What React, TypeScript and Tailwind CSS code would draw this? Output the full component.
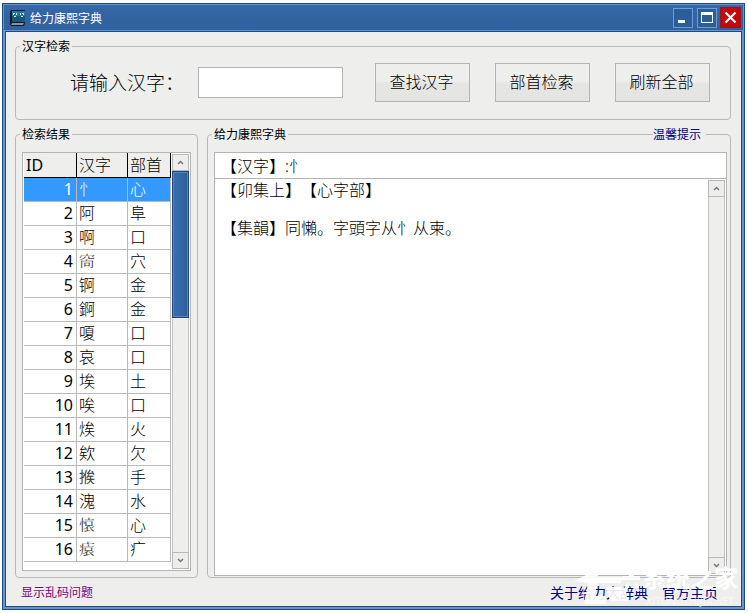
import type { ReactNode } from "react";
import clsx from "clsx";

const entries = [
  { id: 1, char: "忄", radical: "心" },
  { id: 2, char: "阿", radical: "阜" },
  { id: 3, char: "啊", radical: "口" },
  { id: 4, char: "𥥩", radical: "穴", rare: true },
  { id: 5, char: "锕", radical: "金" },
  { id: 6, char: "錒", radical: "金" },
  { id: 7, char: "嗄", radical: "口" },
  { id: 8, char: "哀", radical: "口" },
  { id: 9, char: "埃", radical: "土" },
  { id: 10, char: "唉", radical: "口" },
  { id: 11, char: "㶼", radical: "火" },
  { id: 12, char: "欸", radical: "欠" },
  { id: 13, char: "𢰇", radical: "手", rare: true },
  { id: 14, char: "溾", radical: "水" },
  { id: 15, char: "𢜺", radical: "心", rare: true },
  { id: 16, char: "𤸖", radical: "疒", rare: true },
];

const definition = "【卯集上】【心字部】\n\n【集韻】同懶。字頭字从忄从柬。";

const Group = ({
  title,
  className,
  children,
}: {
  title: string;
  className?: string;
  children: ReactNode;
}) => (
  <fieldset className={clsx("min-w-0 rounded border border-[#b9b9b9]", className)}>
    <legend className="ml-1 px-[2px] pt-[2px] text-xs leading-4">{title}</legend>
    {children}
  </fieldset>
);

const ToolButton = ({ children }: { children: ReactNode }) => (
  <button
    type="button"
    className="h-[39px] w-[95px] shrink-0 border border-[#b4b4b4] bg-linear-to-b from-[#eeeeed] from-45% to-[#e5e5e4] to-55% pr-[2px] pb-[2px] text-base font-light"
  >
    {children}
  </button>
);

const ScrollButton = ({ up }: { up?: boolean }) => (
  <button
    type="button"
    aria-label={up ? "向上滚动" : "向下滚动"}
    className="flex h-[17px] shrink-0 items-center justify-center border border-[#b9b9b9] bg-[#ededec]"
  >
    <svg width="7" height="5" viewBox="0 0 7 5" fill="none" stroke="#777" strokeWidth="1.5">
      <path d={up ? "M1 4 L3.5 1.5 L6 4" : "M1 1 L3.5 3.5 L6 1"} />
    </svg>
  </button>
);

const ScrollBar = ({ thumb }: { thumb?: boolean }) => (
  <div className="flex w-[17px] shrink-0 flex-col bg-[#eeeeec]">
    <ScrollButton up />
    <div className="grow border-x border-[#c2c2c2]">
      {thumb && (
        <div className="-mx-px h-[147px] border border-[#1d4680] bg-linear-to-r from-[#3a6dac] to-[#2d5f9e] inset-ring inset-ring-[#5585bd]" />
      )}
    </div>
    <ScrollButton />
  </div>
);

const TitleBar = () => (
  <header className="mb-px flex h-[25px] items-center bg-linear-to-b from-[#3667a8] to-[#2e619e] pl-[6px] pr-[2px] text-white">
    <svg width="16" height="16" viewBox="0 0 16 16">
      <path d="M1 0 H15 V13 L14 16 H1 L0 14 V2 Z" fill="#0c1c2a" />
      <path d="M2 1 H15 V12 H2 Z" fill="#15577f" />
      <path d="M2 1 H15 V6 H2 Z" fill="#1f78a3" />
      <path d="M3 3 H5 V4 H4 V5 H3 Z M6 3 H7 V5 H6 Z M10 3 H11 V5 H10 Z M12 3 H14 V5 H13 V4 H12 Z M4 6 H6 V7 H4 Z M11 6 H13 V7 H11 Z" fill="#d5f6ff" />
      <path d="M2 13 H14 L13 15 H1 Z" fill="#8a9296" />
    </svg>
    <h1 className="ml-[4px] grow pt-[2px] text-xs">给力康熙字典</h1>
    <button
      type="button"
      aria-label="最小化"
      className="flex size-[20px] items-center justify-center border border-[#6f9dd2] bg-[#2c5d9b]"
    >
      <svg width="14" height="14" viewBox="0 0 14 14">
        <path d="M2 9 H9 V12 H2 Z" fill="#fff" />
      </svg>
    </button>
    <button
      type="button"
      aria-label="最大化"
      className="ml-[4px] flex size-[20px] items-center justify-center border border-[#6f9dd2] bg-[#2c5d9b]"
    >
      <svg width="12" height="12" viewBox="0 0 12 12">
        <path d="M0 0 H12 V11 H0 Z M1 3 V10 H11 V3 Z" fill="#fff" fillRule="evenodd" />
      </svg>
    </button>
    <button
      type="button"
      aria-label="关闭"
      className="ml-[3px] flex size-[21px] items-center justify-center border border-[#8a1a2c] bg-[#cb0606]"
    >
      <svg width="13" height="13" viewBox="0 0 13 13" stroke="#fff" strokeWidth="2.2">
        <path d="M1.5 1.5 L11.5 11.5 M11.5 1.5 L1.5 11.5" />
      </svg>
    </button>
  </header>
);

const ResultTable = () => (
  <table className="w-[147px] shrink-0 table-fixed border-separate border-spacing-0 self-start text-left text-base leading-[23px]">
    <thead>
      <tr className="h-[25px] bg-[#eeeeec] leading-6">
        <th className="w-[53px] border-r border-b border-black p-0 pl-[2px] font-normal">ID</th>
        <th className="w-[51px] border-r border-b border-black p-0 pl-[2px] font-light">汉字</th>
        <th className="w-[43px] border-r border-b border-black p-0 pl-[2px] font-light">部首</th>
      </tr>
    </thead>
    <tbody>
      {entries.map(({ id, char, radical, rare }) => (
        <tr key={id} className={clsx("h-6", id === 1 && "bg-[#3399ff] text-white")}>
          <td className="border-r border-b border-[#b9b9b9] p-0 pr-[3px] text-right">{id}</td>
          <td className="border-r border-b border-[#b9b9b9] p-0 pl-[2px]">
            <div
              className={clsx(
                "h-[23px] overflow-hidden",
                rare ? "font-normal text-[#444]" : "font-light",
              )}
            >
              {char}
            </div>
          </td>
          <td className="border-r border-b border-[#b9b9b9] p-0 pl-[2px] font-light">{radical}</td>
        </tr>
      ))}
    </tbody>
  </table>
);

const Watermark = () => (
  <div
    aria-hidden="true"
    className="pointer-events-none absolute right-[6px] bottom-[3px] flex items-end text-white"
  >
    <svg width="66" height="48" viewBox="0 0 66 48" fill="#fff" fillOpacity="0.9">
      <path d="M0 23 L30 8 L37 0 L56 13 L48 14 L37 7 L22 19 L50 19 L46 25 L24 25 L20 38 L31 38 L32 46 L10 46 L14 25 Z" />
      <path d="M32 29 L50 29 L54 43 L36 43 Z" />
      <path d="M54 13 L58 12 L60 18 L66 18 L66 22 L48 22 L49 18 L55 18 Z" />
      <path d="M53 25 L56 26 L53 33 L49 33 Z M61 25 L64 26 L66 33 L62 33 Z" />
    </svg>
    <div className="pl-[2px] text-center">
      <p className="text-2xl leading-7 font-bold">系统之家</p>
      <p className="pt-[4px] text-[10px] leading-[10px] opacity-60">XITONGZHIJIA.NET</p>
    </div>
  </div>
);

export default function App() {
  return (
    <div className="bg-white pt-[3px] pr-[3px] pb-[3px] pl-[2px] font-['Noto_Sans','Noto_Sans_CJK_SC',sans-serif] text-black [text-spacing-trim:space-all]">
      <div className="relative border border-[#1f4a80] bg-[#6595cc] px-px pt-px pb-[2px]">
        <TitleBar />
        <main className="mx-px border border-[#1f4a80] bg-[#eeeeec] pt-[5px] pr-[10px] pl-[9px]">
          <Group title="汉字检索">
            <div className="flex items-center pt-2 pb-[17px] pl-[54px]">
              <label
                htmlFor="query"
                className="w-[128px] pt-[2px] text-[19px] font-light whitespace-nowrap"
              >
                请输入汉字：
              </label>
              <input
                id="query"
                type="text"
                className="mr-8 h-[31px] w-[145px] border border-[#b4b4b4] bg-white px-2"
              />
              <div className="flex gap-[25px]">
                <ToolButton>查找汉字</ToolButton>
                <ToolButton>部首检索</ToolButton>
                <ToolButton>刷新全部</ToolButton>
              </div>
            </div>
          </Group>

          <div className="mt-[5px] flex gap-[9px]">
            <Group title="检索结果" className="w-[183px] shrink-0">
              <div className="mx-[6px] mt-[9px] mb-[6px] flex border border-[#b4b4b4] bg-white px-px">
                <div className="mr-px pb-2">
                  <ResultTable />
                </div>
                <div className="flex py-px">
                  <ScrollBar thumb />
                </div>
              </div>
            </Group>

            <div className="relative flex min-w-0 grow">
              <Group title="给力康熙字典" className="flex grow flex-col">
                <div className="mt-[9px] mr-[3px] mb-px ml-[6px] flex grow flex-col">
                  <input
                    type="text"
                    readOnly
                    aria-label="汉字"
                    value="【汉字】:忄"
                    className="h-[26px] w-full shrink-0 border border-b-0 border-[#b4b4b4] bg-white px-[6px] pb-[2px] text-base font-light"
                  />
                  <div className="flex grow border border-[#b4b4b4] bg-white p-px">
                    <textarea
                      readOnly
                      aria-label="释义"
                      value={definition}
                      className="grow resize-none overflow-hidden pt-px pl-[5px] text-base leading-[19px] font-light"
                    />
                    <ScrollBar />
                  </div>
                </div>
              </Group>
              <a
                href="#tips"
                className="absolute top-0 right-[25px] bg-[#eeeeec] pt-[2px] pr-[5px] text-xs leading-4 text-[#000080]"
              >
                温馨提示
              </a>
            </div>
          </div>

          <footer className="flex h-7 items-center pt-[2px] pr-[13px] pl-[6px] text-sm text-[#000080]">
            <a href="#encoding" className="grow text-xs text-[#800080]">
              显示乱码问题
            </a>
            <a href="#about">关于给力大辞典</a>
            <a href="#home" className="ml-[14px]">
              官方主页
            </a>
          </footer>
        </main>
        <Watermark />
      </div>
    </div>
  );
}
